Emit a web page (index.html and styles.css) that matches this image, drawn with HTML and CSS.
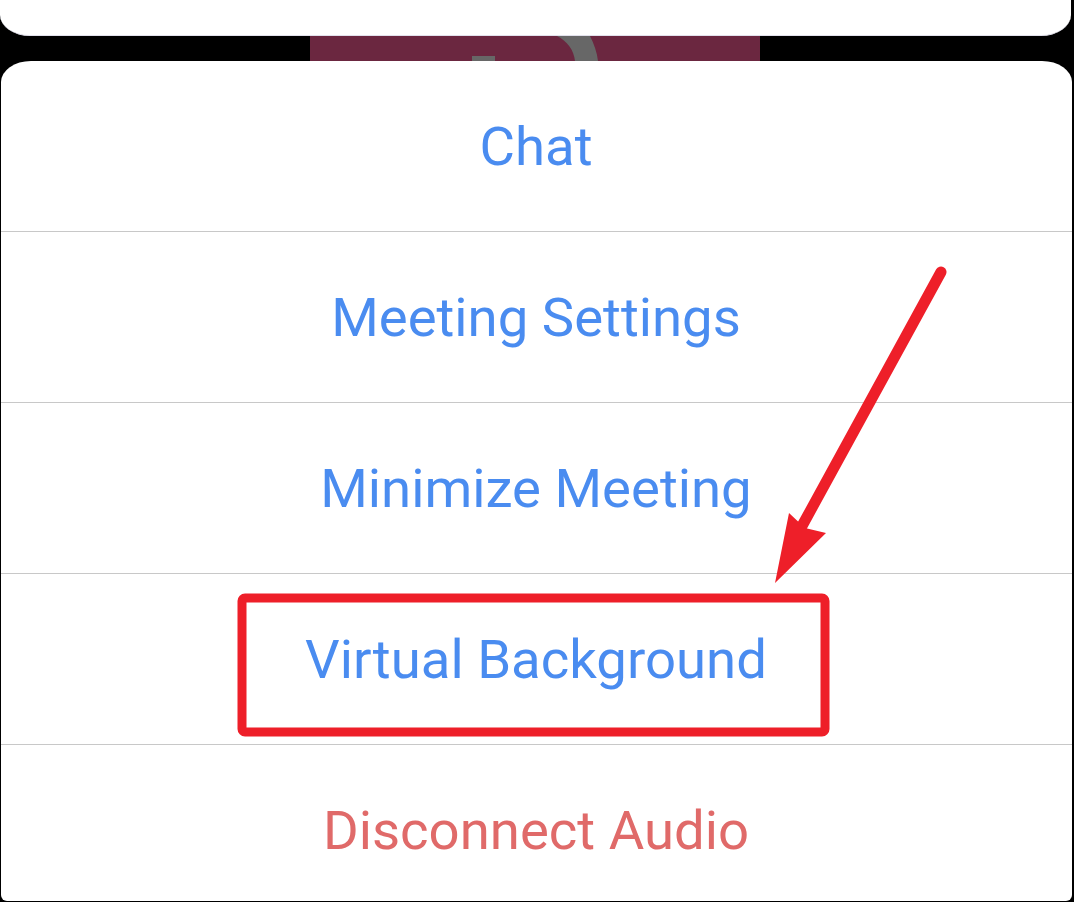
FILE: index.html
```html
<!DOCTYPE html>
<html lang="en">
<head>
    <meta charset="UTF-8">
    <meta name="viewport" content="width=device-width, initial-scale=1.0">
    <title>Meeting Menu</title>
    <link rel="stylesheet" href="styles.css">
</head>
<body>
    <div class="screen">
        <div class="top-sheet"></div>

        <div class="backdrop">
            <div class="video-tile">
                <svg width="450" height="25" viewBox="0 0 450 25">
                    <rect x="162" y="20" width="23" height="5" fill="#676767" />
                    <path d="M247 0 L280 0 C284 8 287 16 288 25 L265 25 C264 14 257 5 247 0 Z" fill="#676767" />
                </svg>
            </div>
        </div>

        <div class="sheet">
            <div class="menu-item">Chat</div>
            <div class="menu-item">Meeting Settings</div>
            <div class="menu-item">Minimize Meeting</div>
            <div class="menu-item">Virtual Background</div>
            <div class="menu-item menu-item--danger menu-item--last">Disconnect Audio</div>
        </div>

        <!-- annotation drawn over the menu -->
        <svg class="annotation" width="1074" height="902" viewBox="0 0 1074 902">
            <rect x="242" y="598" width="583" height="134" rx="3" fill="none" stroke="#ee1f29" stroke-width="9" />
            <line x1="941" y1="272" x2="802" y2="526" stroke="#ee1f29" stroke-width="11" stroke-linecap="round" />
            <polygon points="775,583 789,513 805,528 826,533" fill="#ee1f29" />
        </svg>
    </div>
</body>
</html>
```

FILE: styles.css
```css
body {
    margin: 0;
    background-color: #000000;
    font-family: Roboto, 'Noto Sans', Arial, sans-serif;
}

.screen {
    position: relative;
    width: 1074px;
    height: 902px;
    overflow: hidden;
    background-color: #000000;
}

.top-sheet {
    height: 35px;
    margin-right: 3px;
    background-color: #ffffff;
    border-bottom: 1px solid #e2e1ec;
    border-radius: 0 0 30px 30px / 0 0 21px 21px;
}

.backdrop {
    height: 25px;
}

.video-tile {
    width: 450px;
    height: 25px;
    margin-left: 310px;
    background-color: #6b2740;
}

.video-tile svg {
    display: block;
}

.sheet {
    height: 840px;
    margin: 0 2px 0 1px;
    background-color: #ffffff;
    border-radius: 30px 30px 6px 6px / 21px 21px 6px 6px;
    overflow: hidden;
}

.menu-item {
    height: 171px;
    box-sizing: border-box;
    display: flex;
    align-items: center;
    justify-content: center;
    border-bottom: 1px solid #c8c8c8;
    color: #4a8cf0;
    font-size: 54.5px;
    margin-left: -1px;
}

.menu-item--danger {
    color: #e06a69;
}

.menu-item--last {
    height: 156px;
    padding-top: 14px;
    border-bottom: none;
}

.annotation {
    position: absolute;
    top: 0;
    left: 0;
    pointer-events: none;
}
```
